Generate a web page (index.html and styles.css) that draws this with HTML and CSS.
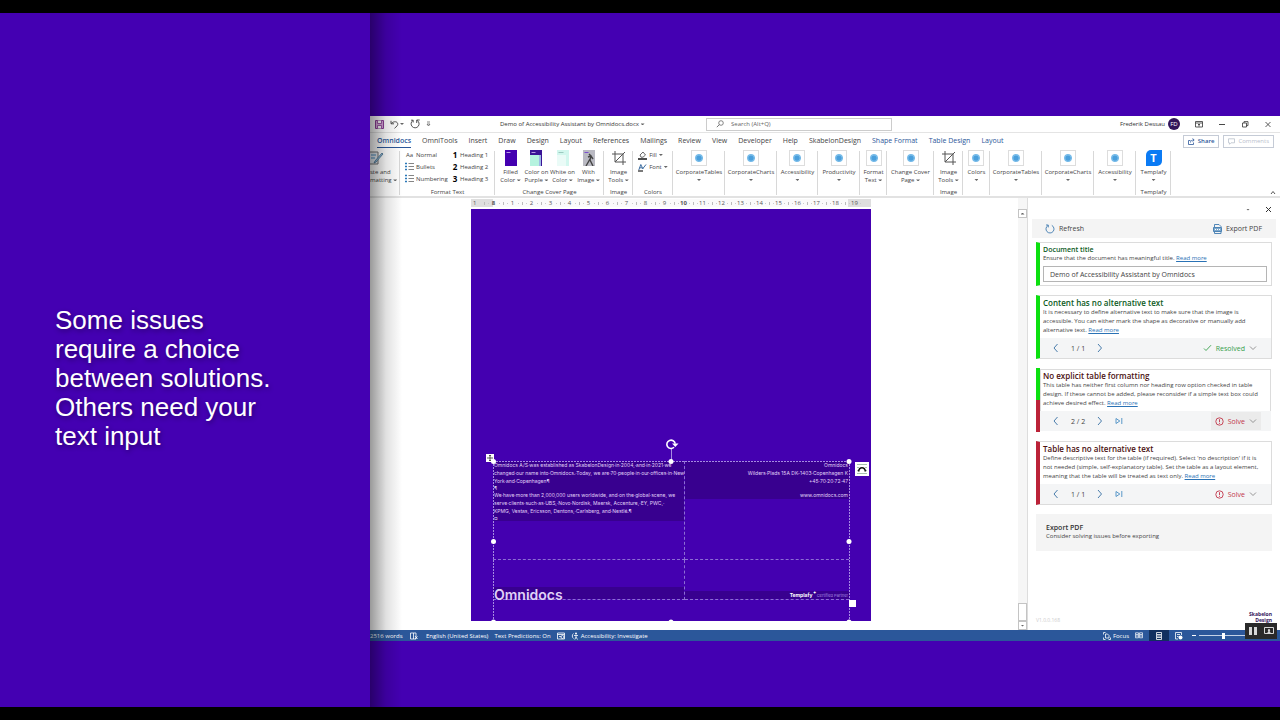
FILE: index.html
```html
<!DOCTYPE html>
<html lang="en">
<head>
    <meta charset="UTF-8">
    <meta name="viewport" content="width=device-width, initial-scale=1.0">
    <title>Accessibility Assistant by Omnidocs</title>
    <link rel="stylesheet" href="styles.css">
</head>
<body>
    <!-- shared icons -->
    <svg class="defs" aria-hidden="true">
        <symbol id="i-dot" viewBox="0 0 16 16"><circle cx="8" cy="8" r="4.5" fill="#86c5ee"/><circle cx="8" cy="8" r="3" fill="#4a9fdc"/><circle cx="8" cy="8" r="3.8" fill="none" stroke="#5fa9dc" stroke-width=".8" stroke-dasharray="1.2 .8"/></symbol>
        <symbol id="i-crop" viewBox="0 0 16 16"><path d="M4 1v11h11M1 4h11v11M4 12l10-10" fill="none" stroke="#555" stroke-width="1"/></symbol>
        <symbol id="i-list" viewBox="0 0 9 9"><path d="M3.5 1.5H9M3.5 4.5H9M3.5 7.5H9" stroke="#666" stroke-width=".8"/><path d="M0 1.5h2M0 4.5h2M0 7.5h2" stroke="#2b78b8" stroke-width="1.4"/></symbol>
        <symbol id="i-prev" viewBox="0 0 8 10"><path d="M5.5 1L2 5l3.500 4" fill="none" stroke="#4a7dac" stroke-width="1"/></symbol>
        <symbol id="i-next" viewBox="0 0 8 10"><path d="M2 1l3.500 4L2 9" fill="none" stroke="#4a7dac" stroke-width="1"/></symbol>
        <symbol id="i-last" viewBox="0 0 8 8"><path d="M1 1.500v5L4.800 4zM6.800 1v6" fill="none" stroke="#4a8fc4" stroke-width=".9"/></symbol>
        <symbol id="i-down" viewBox="0 0 8 8"><path d="M1 2.500l3 3 3-3" fill="none" stroke="#8a8a8a" stroke-width=".9"/></symbol>
        <symbol id="i-warn" viewBox="0 0 9 9"><circle cx="4.500" cy="4.500" r="3.700" fill="none" stroke="#c2364a" stroke-width=".9"/><path d="M4.500 2.200v2.800M4.500 5.800v1" stroke="#c2364a" stroke-width=".9"/></symbol>
    </svg>

    <div class="slide">
        <aside class="caption">
            <p>Some issues<br>require a choice<br>between solutions.<br>Others need your<br>text input</p>
        </aside>

        <main class="stage">
            <div class="word">
                <header class="titlebar">
                    <div class="quick">
                        <button aria-label="Save"><svg width="9" height="9" viewBox="0 0 9 9"><path d="M.5.5h8v8h-8z" fill="#d9a6dd" stroke="#8d3f96"/><path d="M2.500.5v3h4v-3M2.500 8.500v-3h4v3" fill="#fff" stroke="#8d3f96" stroke-width=".8"/></svg></button>
                        <button aria-label="Undo"><svg width="9" height="9" viewBox="0 0 9 9"><path d="M1 .8v3h3M1.200 3.600C3 1.500 6.500.9 7.600 3.200c.8 2-1 3.300-3.100 5.100" fill="none" stroke="#444" stroke-width=".9"/></svg></button>
                        <span class="caret"></span>
                        <button aria-label="Redo"><svg width="10" height="10" viewBox="0 0 10 10"><path d="M7 1.300A4 4 0 1 1 3 1.400M6.700 4V1h3M3.200 3.500V1.200H1" fill="none" stroke="#444" stroke-width=".9"/></svg></button>
                        <button class="more" aria-label="Customize"><svg width="5" height="6" viewBox="0 0 5 6"><path d="M1 1h3M1 3l1.500 2L4 3z" fill="none" stroke="#555" stroke-width=".7"/></svg></button>
                    </div>
                    <div class="docname">Demo of Accessibility Assistant by Omnidocs.docx <span class="caret"></span></div>
                    <label class="search">
                        <svg width="8" height="8" viewBox="0 0 8 8"><circle cx="5" cy="3" r="2.300" fill="none" stroke="#555" stroke-width=".7"/><path d="M3.300 4.700L.8 7.200" stroke="#555" stroke-width=".8"/></svg>
                        <input type="text" placeholder="Search (Alt+Q)" aria-label="Search">
                    </label>
                    <div class="account">
                        <span>Frederik Dessau</span>
                        <span class="avatar">FD</span>
                        <button aria-label="Ribbon display options"><svg width="8" height="7" viewBox="0 0 8 7"><path d="M.5.5h7v5.500h-7zM.5 2h7M4 5.500V3M3 4l1-1 1 1" fill="none" stroke="#333" stroke-width=".8"/></svg></button>
                        <button aria-label="Minimize"><svg width="8" height="7" viewBox="0 0 8 7"><path d="M1 3.500h6" stroke="#333" stroke-width=".9"/></svg></button>
                        <button aria-label="Restore"><svg width="8" height="7" viewBox="0 0 8 7"><path d="M1.500 2h4v4h-4zM3 2V.6h4v4H5.500" fill="none" stroke="#333" stroke-width=".8"/></svg></button>
                        <button aria-label="Close"><svg width="8" height="7" viewBox="0 0 8 7"><path d="M1.500 1l5 5M6.500 1l-5 5" stroke="#333" stroke-width=".8"/></svg></button>
                    </div>
                </header>

                <nav class="tabs">
                    <a href="#" class="active">Omnidocs</a>
                    <a href="#">OmniTools</a>
                    <a href="#">Insert</a>
                    <a href="#">Draw</a>
                    <a href="#">Design</a>
                    <a href="#">Layout</a>
                    <a href="#">References</a>
                    <a href="#">Mailings</a>
                    <a href="#">Review</a>
                    <a href="#">View</a>
                    <a href="#">Developer</a>
                    <a href="#">Help</a>
                    <a href="#">SkabelonDesign</a>
                    <a href="#" class="context">Shape Format</a>
                    <a href="#" class="context">Table Design</a>
                    <a href="#" class="context">Layout</a>
                    <div class="share">
                        <button class="share-btn"><svg width="7" height="7" viewBox="0 0 7 7"><path d="M2.500 2.500h-2v4h5V4.500M2.500 4.500C2.500 2.500 4 2 6 2M4.500.4L6.200 2 4.500 3.600" fill="none" stroke="#2b579a" stroke-width=".8"/></svg>Share</button>
                        <button class="share-btn muted"><svg width="7" height="7" viewBox="0 0 7 7"><path d="M.5.8h6v4H3L1.500 6.300V4.800h-1z" fill="none" stroke="#b9c0cc" stroke-width=".8"/></svg>Comments</button>
                    </div>
                </nav>

                <div class="ribbon">
                    <div class="group paste">
                        <button class="big"><svg width="16" height="16" viewBox="0 0 16 16"><path d="M-1 2h9v12h-9z" fill="#e8eef4" stroke="#777"/><path d="M1 5h5M1 8h4" stroke="#4a8fc4"/><path d="M13 4L6 12l-2 1 1-2 7-8z" fill="#9cc8e6" stroke="#46708f" stroke-width=".8"/></svg>ste and<span>matting <i class="caret"></i></span></button>
                    </div>
                    <div class="group">
                        <div class="styles">
                            <button><b class="aa">Aa</b>Normal</button>
                            <button><b>1</b>Heading 1</button>
                            <button><svg width="9" height="9"><use href="#i-list"/></svg>Bullets</button>
                            <button><b>2</b>Heading 2</button>
                            <button><svg width="9" height="9"><use href="#i-list"/></svg>Numbering</button>
                            <button><b>3</b>Heading 3</button>
                        </div>
                        <small>Format Text</small>
                    </div>
                    <div class="group">
                        <div class="covers">
                            <button class="big"><svg width="12" height="16" viewBox="0 0 12 16"><path d="M0 0h12v16H0z" fill="#4400b0"/><path d="M1.500 2.500h4" stroke="#b79ae6"/></svg>Filled<span>Color <i class="caret"></i></span></button>
                            <button class="big"><svg width="12" height="16" viewBox="0 0 12 16"><path d="M0 0h12v16H0z" fill="#b5f3df"/><path d="M0 0h12v16h-1V5H0z" fill="#3a1496"/><path d="M9 5h2v11H9z" fill="#9db8e6"/><path d="M1.500 2.500h4" stroke="#b79ae6"/></svg>Color on<span>Purple <i class="caret"></i></span></button>
                            <button class="big"><svg width="12" height="16" viewBox="0 0 12 16"><path d="M0 0h12v16H0z" fill="#d2f7ee"/><path d="M0 5h9v11H0z" fill="#eafbf7"/><path d="M1.500 2.500h5" stroke="#9bc9bf"/></svg>White on<span>Color <i class="caret"></i></span></button>
                            <button class="big"><svg width="12" height="16" viewBox="0 0 12 16"><path d="M0 0h12v16H0z" fill="#b9b9c2"/><path d="M1.500 2.500h4" stroke="#7a4fd0"/><path d="M6 4l2 2-1 4 3 6M7 9l-4 7M5 7l3-1 2 3" fill="none" stroke="#444" stroke-width="1.400"/></svg>With<span>Image <i class="caret"></i></span></button>
                        </div>
                        <small>Change Cover Page</small>
                    </div>
                    <div class="group">
                        <button class="big"><svg width="16" height="16"><use href="#i-crop"/></svg>Image<span>Tools <i class="caret"></i></span></button>
                        <small>Image</small>
                    </div>
                    <div class="group">
                        <div class="colors">
                            <button><svg width="9" height="9" viewBox="0 0 9 9"><path d="M2 4l3-3 2.500 3L5 6.200H3z" fill="none" stroke="#444" stroke-width=".8"/><path d="M0 8h9" stroke="#222" stroke-width="1.600"/></svg>Fill <i class="caret"></i></button>
                            <button><svg width="9" height="9" viewBox="0 0 9 9"><path d="M.8 7l2-5.500L5 6M1.500 4.800h2.500M8 1.500L4.500 6" fill="none" stroke="#2b5f96" stroke-width=".9"/><path d="M0 8h5" stroke="#222" stroke-width="1.200"/></svg>Font <i class="caret"></i></button>
                        </div>
                        <small>Colors</small>
                    </div>
                    <div class="group"><button class="big"><svg class="box"><use href="#i-dot"/></svg>CorporateTables<i class="caret"></i></button></div>
                    <div class="group"><button class="big"><svg class="box"><use href="#i-dot"/></svg>CorporateCharts<i class="caret"></i></button></div>
                    <div class="group"><button class="big"><svg class="box"><use href="#i-dot"/></svg>Accessibility<i class="caret"></i></button></div>
                    <div class="group"><button class="big"><svg class="box"><use href="#i-dot"/></svg>Productivity<i class="caret"></i></button></div>
                    <div class="group"><button class="big"><svg class="box"><use href="#i-dot"/></svg>Format<span>Text <i class="caret"></i></span></button></div>
                    <div class="group"><button class="big"><svg class="box"><use href="#i-dot"/></svg>Change Cover<span>Page <i class="caret"></i></span></button></div>
                    <div class="group">
                        <button class="big"><svg width="16" height="16"><use href="#i-crop"/></svg>Image<span>Tools <i class="caret"></i></span></button>
                        <small>Image</small>
                    </div>
                    <div class="group"><button class="big"><svg class="box"><use href="#i-dot"/></svg>Colors<i class="caret"></i></button></div>
                    <div class="group"><button class="big"><svg class="box"><use href="#i-dot"/></svg>CorporateTables<i class="caret"></i></button></div>
                    <div class="group"><button class="big"><svg class="box"><use href="#i-dot"/></svg>CorporateCharts<i class="caret"></i></button></div>
                    <div class="group"><button class="big"><svg class="box"><use href="#i-dot"/></svg>Accessibility<i class="caret"></i></button></div>
                    <div class="group">
                        <button class="big"><span class="templafy">T</span>Templafy<i class="caret"></i></button>
                        <small>Templafy</small>
                    </div>
                    <button class="collapse" aria-label="Collapse ribbon"><svg width="6" height="5" viewBox="0 0 6 5"><path d="M1 4l2-2.500L5 4" fill="none" stroke="#444" stroke-width=".9"/></svg></button>
                </div>

                <div class="workspace">
                    <div class="canvas">
                        <div class="ruler">
                            <span>1</span><span class="mark">8</span><span>1</span><span>2</span><span>3</span><span>4</span><span>5</span><span>6</span><span>7</span><span>8</span><span>9</span><span class="mark">10</span><span>11</span><span>12</span><span>13</span><span>14</span><span>15</span><span>16</span><span>17</span><span>18</span><span>19</span>
                        </div>
                        <article class="page">
                            <div class="doc-table">
                                <div class="cell">
                                    <div class="selected">
                                        <p>Omnidocs A/S·was established as SkabelonDesign·in·2004,·and·in·2021·we<br>changed·our name into·Omnidocs.·Today, we are·70·people·in·our·offices·in·New<br>York·and·Copenhagen¶</p>
                                        <p class="mark-line">¶</p>
                                        <p>We·have·more than 2,000,000 users worldwide, and·on the·global·scene, we<br>serve·clients·such·as·UBS,·Novo·Nordisk, Maersk, Accenture,·EY, PWC,·<br>KPMG, Vestas, Ericsson, Dentons,·Carlsberg, and·Nestlé.¶</p>
                                        <p class="mark-line">¤</p>
                                    </div>
                                </div>
                                <div class="cell right">
                                    <div class="selected">
                                        <p>Omnidocs<br>Wilders·Plads 15A DK-1403·Copenhagen K<br>+45·70·20·72·47</p>
                                        <p class="mark-line">&nbsp;</p>
                                        <p>www.omnidocs.com</p>
                                    </div>
                                </div>
                                <div class="cell foot"><div class="selected brand">Omnidocs</div></div>
                                <div class="cell foot right"><div class="selected partner"><b>Templafy<sup>✦</sup></b> Certified Partner</div></div>
                            </div>
                            <!-- text box selection frame -->
                            <svg class="frame" viewBox="0 0 400 200">
                                <g fill="none" stroke="#a68ae2" stroke-width="1">
                                    <path d="M22.500 40v160M378.500 40v160M22 40.500h357" stroke-dasharray="2 1"/>
                                    <path d="M200.500 28v12"/>
                                </g>
                                <g fill="#fff">
                                    <circle cx="22.500" cy="40.500" r="2.500"/><circle cx="200" cy="40.500" r="2.500"/><circle cx="378" cy="40.500" r="2.500"/>
                                    <circle cx="22.500" cy="120.500" r="2.500"/><circle cx="378" cy="120.500" r="2.500"/>
                                    <circle cx="22.500" cy="201" r="2.500"/><circle cx="200" cy="201" r="2.500"/><circle cx="378" cy="201" r="2.500"/>
                                    <path d="M378 179h7v7h-7zM15 33h8v8h-8z"/>
                                    <path d="M384 41h14v14h-14z"/>
                                </g>
                                <path d="M19 34v6M16 37h6M18 35l1-1 1 1M18 39l1 1 1-1" fill="none" stroke="#333" stroke-width=".8"/>
                                <path d="M203 26.300a4.200 4.200 0 1 1 1.200-3.600" fill="none" stroke="#fff" stroke-width="1.600"/><path d="M201 22.500h6.500l-3.200 3.600z" fill="#fff"/>
                                <path d="M386 43.500h10M386 52.500h10M386 46.500h2M394 46.500h2M386 49.500h1M395 49.500h1" stroke="#8fae9c" stroke-width=".8"/><path d="M387.500 50.500c1-5 6-5 7 0" fill="none" stroke="#111" stroke-width="1.600"/>
                            </svg>
                        </article>
                    </div>
                    <div class="scrollbar">
                        <button aria-label="Scroll up"><i class="caret up"></i></button>
                        <div class="track"><div class="thumb"></div></div>
                        <button aria-label="Scroll down"><i class="caret"></i></button>
                    </div>

                    <section class="pane">
                        <div class="pane-head">
                            <button aria-label="Pane options"><i class="caret"></i></button>
                            <button aria-label="Close pane"><svg width="7" height="7" viewBox="0 0 7 7"><path d="M1 1l5 5M6 1L1 6" stroke="#333" stroke-width="1"/></svg></button>
                        </div>
                        <div class="pane-tools">
                            <button><svg width="10" height="10" viewBox="0 0 10 10"><path d="M3 1.500a4 4 0 1 0 3.800-.1M1 1h2.300v2.400" fill="none" stroke="#3f7bb0" stroke-width=".9"/></svg>Refresh</button>
                            <button><svg width="9" height="10" viewBox="0 0 9 10"><path d="M1.500 3V.5h4.500l2 2V3M1.500 7.500v2H8v-2" fill="none" stroke="#3f7bb0" stroke-width=".9"/><path d="M.5 3.500h8v4h-8z" fill="#7fa9cc" stroke="#3f7bb0" stroke-width=".9"/><path d="M2 5.500h1M4 5.500h1M6 5.500h1" stroke="#fff"/></svg>Export PDF</button>
                        </div>

                        <div class="card ok first">
                            <h2><label for="doctitle">Document title</label></h2>
                            <p>Ensure that the document has meaningful title. <a href="#">Read more</a></p>
                            <input type="text" id="doctitle" value="Demo of Accessibility Assistant by Omnidocs">
                        </div>

                        <div class="card ok">
                            <h2>Content has no alternative text</h2>
                            <p>It is necessary to define alternative text to make sure that the image is<br>accessible. You can either mark the shape as decorative or manually add<br>alternative text. <a href="#">Read more</a></p>
                            <div class="card-foot">
                                <button aria-label="Previous"><svg width="8" height="10"><use href="#i-prev"/></svg></button>
                                <span>1 / 1</span>
                                <button aria-label="Next"><svg width="8" height="10"><use href="#i-next"/></svg></button>
                                <button class="action done"><svg width="9" height="8" viewBox="0 0 9 8"><path d="M1 4.500l2 2L8 1.200" fill="none" stroke="#35a04a" stroke-width=".9"/></svg>Resolved<svg width="8" height="8"><use href="#i-down"/></svg></button>
                            </div>
                        </div>

                        <div class="card half">
                            <h2>No explicit table formatting</h2>
                            <p>This table has neither first column nor heading row option checked in table<br>design. If these cannot be added, please reconsider if a simple text box could<br>achieve desired effect. <a href="#">Read more</a></p>
                            <div class="card-foot">
                                <button aria-label="Previous"><svg width="8" height="10"><use href="#i-prev"/></svg></button>
                                <span>2 / 2</span>
                                <button aria-label="Next"><svg width="8" height="10"><use href="#i-next"/></svg></button>
                                <button aria-label="Last"><svg width="8" height="8"><use href="#i-last"/></svg></button>
                                <button class="action hover"><svg width="9" height="9"><use href="#i-warn"/></svg>Solve<svg width="8" height="8"><use href="#i-down"/></svg></button>
                            </div>
                        </div>

                        <div class="card bad">
                            <h2>Table has no alternative text</h2>
                            <p>Define descriptive text for the table (if required). Select 'no description' if it is<br>not needed (simple, self-explanatory table). Set the table as a layout element,<br>meaning that the table will be treated as text only. <a href="#">Read more</a></p>
                            <div class="card-foot">
                                <button aria-label="Previous"><svg width="8" height="10"><use href="#i-prev"/></svg></button>
                                <span>1 / 1</span>
                                <button aria-label="Next"><svg width="8" height="10"><use href="#i-next"/></svg></button>
                                <button aria-label="Last"><svg width="8" height="8"><use href="#i-last"/></svg></button>
                                <button class="action"><svg width="9" height="9"><use href="#i-warn"/></svg>Solve<svg width="8" height="8"><use href="#i-down"/></svg></button>
                            </div>
                        </div>

                        <div class="export">
                            <h3>Export PDF</h3>
                            <p>Consider solving issues before exporting</p>
                        </div>

                        <footer class="pane-foot">
                            <span class="version">V1.0.0.168</span>
                            <span class="logo">Skabelon<br>Design</span>
                        </footer>
                    </section>
                </div>

                <footer class="status">
                    <span class="words">2516 words</span>
                    <svg width="8" height="8" viewBox="0 0 8 8"><path d="M.5 1h5.500v6H.5zM3.500 1v6M5 4l2.500 3M7.500 4.500L5 7" fill="none" stroke="#fff" stroke-width=".8"/></svg>
                    <span class="lang">English (United States)</span>
                    <span class="pred">Text Predictions: On</span>
                    <svg width="8" height="8" viewBox="0 0 8 8"><path d="M.5 1h7v6h-7zM.5 2.500h7M2 4.500h2" fill="none" stroke="#fff" stroke-width=".8"/><circle cx="5.500" cy="5" r="1.500" fill="none" stroke="#fff" stroke-width=".8"/></svg>
                    <span class="access"><svg width="8" height="8" viewBox="0 0 8 8"><circle cx="5" cy="1.500" r="1" fill="#fff"/><path d="M2.500 1.500a3.200 3.200 0 0 0 0 5M3 3.500h4M5 3.500V5l-1.200 2.500M5 5l1.500 2.500" fill="none" stroke="#fff" stroke-width=".8"/></svg>Accessibility: Investigate</span>
                    <div class="views">
                        <button><svg width="8" height="8" viewBox="0 0 8 8"><path d="M.5 2.500v-2h2M.5 5.500v2h2M7.500 5.500v2h-2M2.500 2h2l1.500 1.500V6h-3.500z" fill="none" stroke="#fff" stroke-width=".8"/></svg>Focus</button>
                        <button class="view" aria-label="Read mode"><svg width="8" height="7" viewBox="0 0 8 7"><path d="M.5.8h3v5h-3zM4.500.8h3v5h-3zM1 2.500h2M1 4h2M5 2.500h2M5 4h2" fill="none" stroke="#fff" stroke-width=".7"/></svg></button>
                        <button class="view on" aria-label="Print layout"><svg width="6" height="8" viewBox="0 0 6 8"><path d="M.5.5h5v7h-5zM1 2.500h4M1 4h4M1 5.500h4" fill="none" stroke="#fff" stroke-width=".8"/></svg></button>
                        <button class="view" aria-label="Web layout"><svg width="8" height="8" viewBox="0 0 8 8"><path d="M6.500 3V.5h-6v6.500H3M2 2.500h3M2 4.500h1.500" fill="none" stroke="#fff" stroke-width=".8"/><circle cx="5.500" cy="5.500" r="2" fill="#fff"/></svg></button>
                        <span class="minus"></span>
                        <input class="zoom" type="range" min="0" max="100" value="54" aria-label="Zoom">
                    </div>
                    <div class="player">
                        <button aria-label="Pause"><svg width="8" height="8" viewBox="0 0 8 8"><path d="M0 0h3v8H0zM5 0h3v8H5z" fill="#d8d8d8"/></svg></button>
                        <button aria-label="Present"><svg width="10" height="8" viewBox="0 0 10 8"><path d="M.5.5h9v6h-9z" fill="none" stroke="#d8d8d8"/><path d="M5 2a1.200 1.200 0 0 1 .6 2.200L7.500 7h-5l1.900-2.800A1.200 1.200 0 0 1 5 2z" fill="#d8d8d8"/></svg></button>
                    </div>
                </footer>
            </div>
        </main>
    </div>
</body>
</html>
```
FILE: styles.css
```css
* {
    box-sizing: border-box;
}
body {
    margin: 0;
    background-color: #000;
    font-family: "Open Sans", "Noto Sans", sans-serif;
    color: #444;
}
h2, h3, p {
    margin: 0;
}
button {
    display: flex;
    align-items: center;
    padding: 0;
    border: none;
    background: none;
    font: inherit;
    color: inherit;
    cursor: pointer;
}
svg {
    display: block;
    flex: none;
}
.defs {
    position: absolute;
    width: 0;
    height: 0;
}
.caret {
    display: inline-block;
    width: 4px;
    height: 2px;
    background-color: #666;
    clip-path: polygon(0 0, 100% 0, 50% 100%);
    vertical-align: middle;
}
.caret.up {
    clip-path: polygon(50% 0, 100% 100%, 0 100%);
}

/* slide */
.slide {
    display: flex;
    min-height: 100vh;
    border: solid #000;
    border-width: 13px 0;
    background-color: #4400b2;
}
.caption {
    position: relative;
    flex: 0 0 370px;
    display: flex;
    align-items: center;
    padding: 36px 0 0 55px;
    color: #fff;
    font-family: "Liberation Sans", Arial, sans-serif;
    font-size: 26px;
    line-height: 29px;
    text-shadow: 1px 2px 5px rgba(0, 0, 0, 0.4);
}
.caption::after {
    content: "";
    position: absolute;
    top: 0;
    bottom: 0;
    left: 100%;
    width: 32px;
    background: linear-gradient(to right, rgba(0, 0, 0, 0.4), rgba(0, 0, 0, 0.12) 50%, rgba(0, 0, 0, 0));
    z-index: 2;
    pointer-events: none;
}
.stage {
    flex: 1;
    min-width: 0;
    padding: 103px 0 66px;
}

/* word window */
.word {
    display: flex;
    flex-direction: column;
    height: 100%;
    background-color: #fff;
    font-size: 6px;
    overflow: hidden;
}
.titlebar {
    display: grid;
    grid-template-columns: 130px 206px 186px 1fr;
    align-items: center;
    height: 17px;
    border-bottom: 1px solid #e4e4e4;
    color: #333;
}
.quick {
    display: flex;
    align-items: center;
    gap: 6px;
    padding-left: 5px;
}
.quick .caret {
    margin-left: -5px;
}
.search {
    display: flex;
    align-items: center;
    gap: 7px;
    height: 13px;
    padding-left: 9px;
    border: 1px solid #ccc;
}
.search input {
    flex: 1;
    border: none;
    padding: 0;
    outline: none;
    font: inherit;
}
.search input::placeholder {
    color: #666;
}
.account {
    display: flex;
    align-items: center;
    justify-content: flex-end;
    gap: 15px;
    padding-right: 8px;
}
.avatar {
    width: 12px;
    height: 12px;
    margin-left: -12px;
    border-radius: 50%;
    background-color: #32145a;
    color: #fff;
    line-height: 12px;
    text-align: center;
}
.tabs {
    display: flex;
    align-items: center;
    gap: 11px;
    height: 16px;
    padding: 0 6px 0 7px;
    font-size: 7px;
    line-height: 12px;
    white-space: nowrap;
}
.tabs a {
    color: #444;
    text-decoration: none;
}
.tabs .active {
    box-shadow: 0 1px #2b579a;
    color: #2b579a;
    font-weight: 600;
}
.tabs .context {
    color: #2b579a;
}
.share {
    display: flex;
    gap: 4px;
    margin-left: auto;
}
.share-btn {
    gap: 3px;
    height: 13px;
    padding: 0 4px;
    border: 1px solid #c5cbd6;
    color: #2b579a;
    font-weight: 600;
    font-size: 6px;
}
.share-btn.muted {
    color: #b9c0cc;
    font-weight: 400;
}

/* ribbon */
.ribbon {
    display: grid;
    grid-template-columns: 30px 95px 109px 29px 40px 52px 52px 41px 42px 27px 47px 29px 27px 52px 52px 42px 35px 1fr;
    height: 49px;
    padding-top: 1px;
    border-bottom: 2px solid #e2e2e2;
    line-height: 8px;
    white-space: nowrap;
}
.group {
    display: flex;
    flex-direction: column;
    align-items: center;
    background: linear-gradient(#d8d8d8, #d8d8d8) right / 1px 44px no-repeat;
}
.group small {
    margin-top: auto;
    font-size: 6px;
    line-height: 8px;
}
.paste, .paste .big {
    align-items: flex-start;
}
.big {
    flex-direction: column;
}
.big svg, .templafy {
    margin-bottom: 2px;
}
.big > .caret {
    margin-top: 3px;
}
.box {
    width: 16px;
    height: 16px;
    border: 1px solid #ddd;
}
.templafy {
    width: 16px;
    height: 16px;
    border-radius: 5px 0 5px 0;
    background-color: #0b7bf4;
    color: #fff;
    font-size: 11px;
    font-weight: 700;
    line-height: 16px;
}
.styles {
    display: grid;
    grid-template-columns: 47px 38px;
    row-gap: 3px;
}
.styles button {
    gap: 2px;
    height: 9px;
}
.styles b {
    width: 6px;
    color: #000;
    font-size: 8px;
}
.styles .aa {
    width: 9px;
    color: #444;
    font-size: 6px;
    font-weight: 400;
}
.covers {
    display: grid;
    grid-template-columns: repeat(4, 26px);
    justify-items: center;
}
.colors {
    display: grid;
    gap: 2px;
}
.colors button {
    gap: 2px;
    height: 10px;
}
.collapse {
    align-self: end;
    justify-self: end;
    padding: 0 4px 1px 0;
}

/* document area */
.workspace {
    flex: 1;
    display: flex;
    min-height: 0;
}
.canvas {
    flex: 1;
    display: flex;
    flex-direction: column;
    align-items: flex-start;
    padding: 1px 0 9px 101px;
}
.ruler {
    display: flex;
    width: 400px;
    height: 8px;
    margin-bottom: 2px;
    background: linear-gradient(to right, #dedede 22px, #fafafa 22px, #fafafa 377px, #dedede 377px);
    color: #555;
    font-size: 6px;
    line-height: 8px;
}
.ruler span {
    flex: 0 0 19px;
    text-align: center;
    background:
        linear-gradient(#bbb, #bbb) 0 50% / 1px 3px no-repeat,
        linear-gradient(#ccc, #ccc) 4px 50% / 1px 1px no-repeat,
        linear-gradient(#ccc, #ccc) 15px 50% / 1px 1px no-repeat;
}
.ruler span:first-child {
    flex-basis: 13px;
    padding-left: 2px;
    text-align: left;
    background: none;
}
.ruler .mark {
    font-weight: 700;
}
.page {
    position: relative;
    flex: 1;
    display: flex;
    flex-direction: column;
    width: 400px;
    padding: 252px 22px 0;
    background-color: #4400b0;
    color: #e0d2f8;
    font-family: Inter, "Liberation Sans", sans-serif;
    font-size: 5px;
    line-height: 8px;
    white-space: nowrap;
}
.doc-table {
    display: grid;
    grid-template-columns: 192px 1fr;
    grid-template-rows: 99px 40px;
}
.cell {
    border-right: 1px dashed #8d6ed4;
    border-bottom: 1px dashed #8d6ed4;
}
.cell.right {
    text-align: right;
    border-right: none;
}
.selected {
    padding: 0 1px;
    background-color: #38008f;
}
.mark-line {
    line-height: 6px;
}
.foot {
    display: flex;
    flex-direction: column;
    justify-content: flex-end;
}
.brand {
    height: 12px;
    font-size: 14px;
    font-weight: 600;
    line-height: 15px;
}
.partner {
    height: 8px;
    color: #a98be0;
    font-size: 4px;
}
.partner b {
    color: #fff;
    font-size: 5px;
}
.partner sup {
    font-size: 4px;
    line-height: 0;
}
.frame {
    position: absolute;
    left: 0;
    bottom: 0;
    width: 400px;
    height: 200px;
}
.scrollbar {
    display: flex;
    flex-direction: column;
    width: 9px;
    padding-top: 11px;
    background-color: #f6f6f6;
}
.scrollbar button, .thumb {
    justify-content: center;
    height: 9px;
    border: 1px solid #c4c4c4;
    background-color: #fff;
}
.track {
    flex: 1;
    display: flex;
    flex-direction: column;
    justify-content: flex-end;
}
.thumb {
    height: 18px;
}

/* accessibility pane */
.pane {
    flex: 0 0 253px;
    display: flex;
    flex-direction: column;
    padding: 0 8px;
    border-left: 1px solid #ddd;
}
.pane-head {
    display: flex;
    justify-content: flex-end;
    gap: 15px;
    height: 21px;
    padding-top: 2px;
}
.pane-tools {
    display: flex;
    justify-content: space-between;
    height: 19px;
    margin: 0 -4px 4px;
    padding: 0 14px 0 13px;
    background-color: #f4f4f4;
    font-size: 7px;
}
.pane-tools button {
    gap: 4px;
}
.card {
    margin-bottom: 9px;
    padding: 2px 0 0 3px;
    border: 1px solid #dcdcdc;
    border-left: 4px solid #0be00f;
    line-height: 9px;
}
.card h2 {
    color: #4a1010;
    font-size: 8px;
    font-weight: 600;
    line-height: 10px;
}
.card.ok h2 {
    color: #0b5a1c;
}
.card.first {
    padding: 2px 4px 3px 3px;
}
.card.first h2 {
    font-size: 7px;
    line-height: 9px;
}
.card a {
    color: #2a72b5;
}
.card input {
    display: block;
    width: 100%;
    height: 16px;
    margin-top: 3px;
    padding: 0 6px;
    border: 1px solid #b5b5b5;
    color: #444;
    font-family: inherit;
    font-size: 7px;
}
.card.half {
    border-image: linear-gradient(#0be00f 50%, #bb2238 50%) 1;
    border-image-width: 0 0 0 4px;
    box-shadow: inset 0 0 0 1px #dcdcdc;
}
.card.bad {
    border-left-color: #bb2238;
}
.card-foot {
    display: flex;
    align-items: center;
    gap: 11px;
    height: 20px;
    margin: 3px 0 0 -3px;
    padding: 0 10px 0 12px;
    background-color: #f4f5f6;
    font-size: 7px;
}
.action {
    gap: 4px;
    height: 18px;
    margin-left: auto;
    padding: 0 4px;
    color: #c2364a;
}
.action.done {
    color: #35a04a;
}
.action.hover {
    background-color: #ebebeb;
}
.export {
    height: 37px;
    padding: 9px 10px;
    background-color: #f4f4f4;
    line-height: 9px;
}
.export h3 {
    font-size: 7px;
    font-weight: 600;
    color: #333;
}
.pane-foot {
    display: flex;
    justify-content: space-between;
    align-items: flex-end;
    margin-top: auto;
    padding-bottom: 7px;
    color: #ccc;
    font-size: 5px;
    line-height: 6px;
}
.logo {
    color: #32145a;
    font-size: 5px;
    font-weight: 700;
    text-align: right;
}

/* status bar */
.status {
    position: relative;
    display: flex;
    align-items: center;
    height: 11px;
    padding-right: 35px;
    background-color: #2b579a;
    color: #fff;
    white-space: nowrap;
}
.words {
    width: 40px;
}
.lang {
    margin-left: 8px;
}
.pred {
    margin: 0 6px;
}
.access {
    display: flex;
    gap: 2px;
    margin-left: 6px;
}
.views {
    display: flex;
    align-items: center;
    margin-left: auto;
}
.views button {
    gap: 2px;
    height: 11px;
}
.views .view {
    justify-content: center;
    width: 20px;
}
.views .on {
    background-color: #12305f;
}
.minus {
    width: 4px;
    height: 1px;
    margin: 0 3px;
    background-color: #fff;
}
.zoom {
    appearance: none;
    width: 46px;
    height: 1px;
    margin: 0;
    background-color: #c5d2e6;
}
.zoom::-webkit-slider-thumb {
    appearance: none;
    width: 3px;
    height: 6px;
    background-color: #fff;
}
.player {
    position: absolute;
    right: 3px;
    bottom: 2px;
    display: flex;
    justify-content: space-around;
    width: 32px;
    height: 16px;
    background-color: #2a2a2a;
}
```
